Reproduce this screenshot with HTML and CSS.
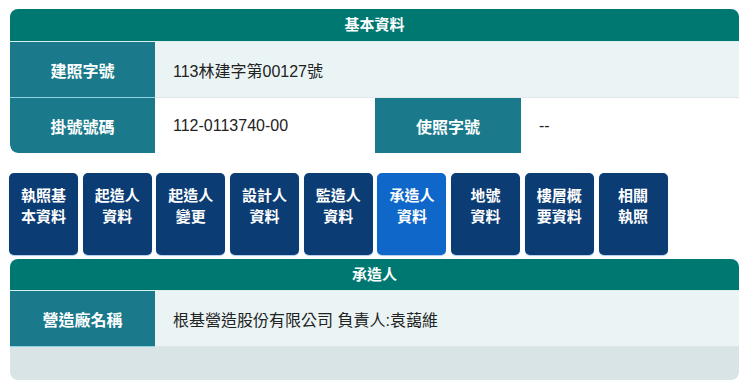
FILE: index.html
```html
<!DOCTYPE html>
<html lang="zh-Hant">

<head>
    <meta charset="UTF-8">
    <meta name="viewport" content="width=device-width, initial-scale=1.0">
    <title>基本資料</title>
    <link rel="stylesheet" href="styles.css">
</head>

<body>

    <div class="wrap">
        <div class="panel">
            <div class="panel-head">基本資料</div>
            <div class="row row-2">
                <div class="cell-label">建照字號</div>
                <div class="cell-value shade">113林建字第00127號</div>
            </div>
            <div class="row row-4 last">
                <div class="cell-label corner">掛號號碼</div>
                <div class="cell-value">112-0113740-00</div>
                <div class="cell-label">使照字號</div>
                <div class="cell-value">--</div>
            </div>
        </div>

        <div class="tabs">
            <button class="tab">執照基<br>本資料</button>
            <button class="tab">起造人<br>資料</button>
            <button class="tab">起造人<br>變更</button>
            <button class="tab">設計人<br>資料</button>
            <button class="tab">監造人<br>資料</button>
            <button class="tab active">承造人<br>資料</button>
            <button class="tab">地號<br>資料</button>
            <button class="tab">樓層概<br>要資料</button>
            <button class="tab">相關<br>執照</button>
        </div>

        <div class="panel">
            <div class="panel-head small">承造人</div>
            <div class="row row-2">
                <div class="cell-label">營造廠名稱</div>
                <div class="cell-value shade">根基營造股份有限公司 負責人:袁藹維</div>
            </div>
            <div class="panel-foot"></div>
        </div>
    </div>

</body>

</html>
```

FILE: styles.css
```css
body {
    margin: 0;
    padding: 0;
    background-color: #fff;
    font-family: "Liberation Sans", Arial, "Noto Sans CJK TC", sans-serif;
    color: #222;
}

.wrap {
    margin: 9px 1px 0 10px;
}

.panel {
    border-radius: 8px;
    overflow: hidden;
}

.panel-head {
    height: 32px;
    line-height: 32px;
    background-color: #007872;
    color: #fff;
    font-weight: bold;
    font-size: 15px;
    text-align: center;
    border-bottom: 1px solid #dcefef;
}

.panel-head.small {
    height: 31px;
    line-height: 31px;
}

.row {
    display: grid;
    height: 56px;
}

.row-2 {
    grid-template-columns: 145px 1fr;
}

.row-4 {
    grid-template-columns: 145px 220px 146px 1fr;
}

.row.last {
    height: 55px;
}

.cell-label {
    background-color: #1a7a8b;
    color: #fff;
    font-weight: bold;
    font-size: 16px;
    display: flex;
    align-items: center;
    justify-content: center;
}

.row-2 .cell-label {
    border-bottom: 1px solid #8fd3e2;
}

.cell-label.corner {
    border-bottom-left-radius: 8px;
}

.cell-value {
    display: flex;
    align-items: center;
    padding-left: 18px;
    font-size: 16px;
    background-color: #fff;
}

.cell-value.shade {
    background-color: #ebf4f4;
    border-bottom: 1px solid #e0e6e8;
}

.tabs {
    display: flex;
    gap: 4.7px;
    margin: 20px 0 0 -1px;
}

.tab {
    width: 69px;
    height: 82px;
    padding: 12px 0 0;
    border: none;
    border-radius: 5px;
    background-color: #0b3c74;
    color: #fff;
    font-family: "Liberation Sans", Arial, "Noto Sans CJK TC", sans-serif;
    font-weight: bold;
    font-size: 15px;
    line-height: 21px;
    text-align: center;
    display: flex;
    justify-content: center;
    box-shadow: 0 1px 1px rgba(70, 140, 220, 0.45);
    cursor: pointer;
}

.tab.active {
    background-color: #0e67c9;
}

.tabs + .panel {
    margin-top: 4px;
}

.panel-foot {
    height: 33px;
    background-color: #d9e4e6;
}
```
